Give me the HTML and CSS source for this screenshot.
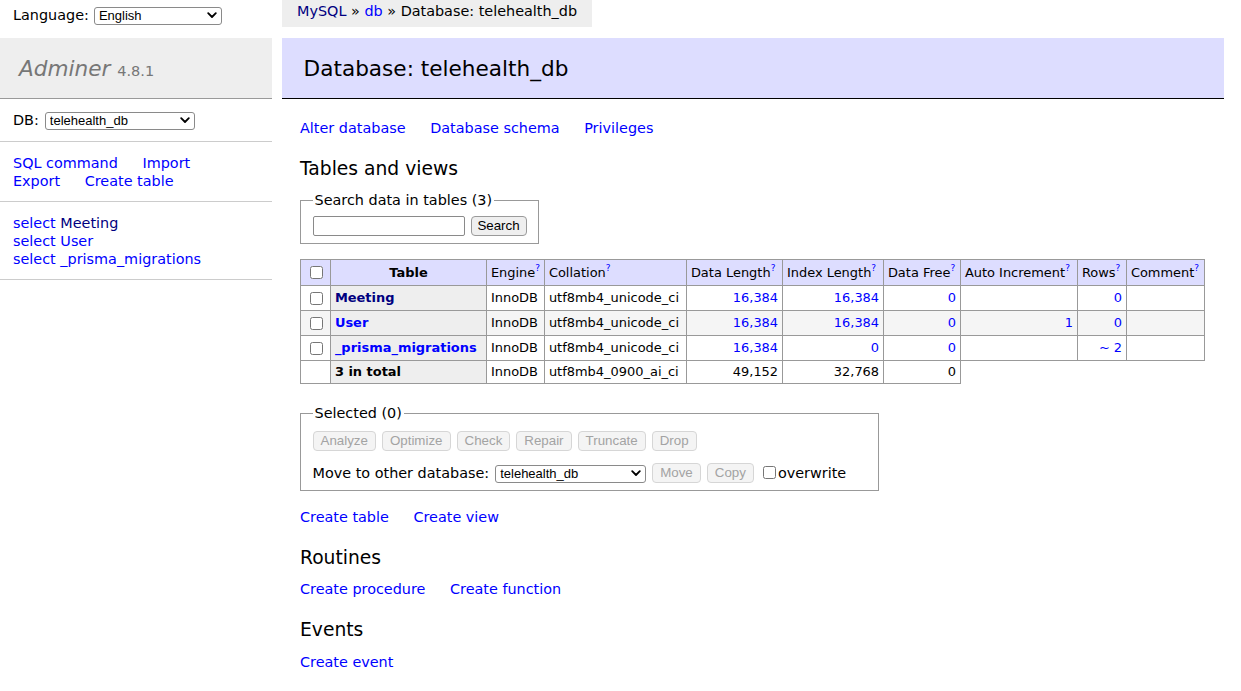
FILE: index.html
```html
<!DOCTYPE html>
<html lang="en">
<head>
<meta charset="utf-8">
<title>Database: telehealth_db - Adminer</title>
<link rel="stylesheet" href="styles.css">
</head>
<body>
<div class="page">
  <div class="lang">
    <span class="lang-label">Language:</span>
    <span class="sel sel-lang">
      <select><option>English</option></select>
      <svg class="chev" width="10" height="7" viewBox="0 0 10 7"><path d="M1.2 1.2 L5 5 L8.8 1.2" fill="none" stroke="#000" stroke-width="1.8" stroke-linecap="round" stroke-linejoin="round"/></svg>
    </span>
  </div>
  <div class="crumb-cell">
    <div class="breadcrumb"><a href="#" class="visited">MySQL</a> » <a href="#">db</a> » Database: telehealth_db</div>
  </div>

  <aside class="menu">
    <h1><a href="#" class="logo">Adminer</a> <span class="version">4.8.1</span></h1>
    <p class="dbs">DB:
      <span class="sel sel-db">
        <select><option>telehealth_db</option></select>
        <svg class="chev" width="10" height="7" viewBox="0 0 10 7"><path d="M1.2 1.2 L5 5 L8.8 1.2" fill="none" stroke="#000" stroke-width="1.8" stroke-linecap="round" stroke-linejoin="round"/></svg>
      </span>
    </p>
    <p class="links"><a href="#">SQL command</a> <a href="#">Import</a><br><a href="#">Export</a> <a href="#">Create table</a></p>
    <ul class="table-menu">
      <li><a href="#">select</a> <a href="#" class="visited">Meeting</a></li>
      <li><a href="#">select</a> <a href="#">User</a></li>
      <li><a href="#">select</a> <a href="#">_prisma_migrations</a></li>
    </ul>
  </aside>

  <main class="content">
    <h2>Database: telehealth_db</h2>
    <p class="links"><a href="#">Alter database</a> <a href="#">Database schema</a> <a href="#">Privileges</a></p>

    <h3>Tables and views</h3>
    <fieldset class="box">
      <legend>Search data in tables (3)</legend>
      <div class="row">
        <input type="search" class="search-input">
        <button class="btn btn-search">Search</button>
      </div>
    </fieldset>

    <table class="list">
      <colgroup>
        <col class="w-cb"><col class="w-name"><col class="w-engine"><col class="w-coll"><col class="w-dlen"><col class="w-ilen"><col class="w-free"><col class="w-ai"><col class="w-rows"><col class="w-comm">
      </colgroup>
      <thead>
        <tr class="head">
          <td><input type="checkbox" class="cb"></td>
          <th class="center">Table</th>
          <td>Engine<sup><a href="#">?</a></sup></td>
          <td>Collation<sup><a href="#">?</a></sup></td>
          <td>Data Length<sup><a href="#">?</a></sup></td>
          <td>Index Length<sup><a href="#">?</a></sup></td>
          <td>Data Free<sup><a href="#">?</a></sup></td>
          <td>Auto Increment<sup><a href="#">?</a></sup></td>
          <td>Rows<sup><a href="#">?</a></sup></td>
          <td>Comment<sup><a href="#">?</a></sup></td>
        </tr>
      </thead>
      <tbody>
        <tr class="data">
          <td><input type="checkbox" class="cb"></td>
          <th><a href="#" class="visited">Meeting</a></th>
          <td>InnoDB</td>
          <td>utf8mb4_unicode_ci</td>
          <td class="num"><a href="#">16,384</a></td>
          <td class="num"><a href="#">16,384</a></td>
          <td class="num"><a href="#">0</a></td>
          <td class="num"></td>
          <td class="num"><a href="#">0</a></td>
          <td></td>
        </tr>
        <tr class="data even">
          <td><input type="checkbox" class="cb"></td>
          <th><a href="#">User</a></th>
          <td>InnoDB</td>
          <td>utf8mb4_unicode_ci</td>
          <td class="num"><a href="#">16,384</a></td>
          <td class="num"><a href="#">16,384</a></td>
          <td class="num"><a href="#">0</a></td>
          <td class="num"><a href="#">1</a></td>
          <td class="num"><a href="#">0</a></td>
          <td></td>
        </tr>
        <tr class="data">
          <td><input type="checkbox" class="cb"></td>
          <th><a href="#">_prisma_migrations</a></th>
          <td>InnoDB</td>
          <td>utf8mb4_unicode_ci</td>
          <td class="num"><a href="#">16,384</a></td>
          <td class="num"><a href="#">0</a></td>
          <td class="num"><a href="#">0</a></td>
          <td class="num"></td>
          <td class="num"><a href="#">~ 2</a></td>
          <td></td>
        </tr>
      </tbody>
      <tfoot>
        <tr class="total">
          <td></td>
          <th>3 in total</th>
          <td>InnoDB</td>
          <td>utf8mb4_0900_ai_ci</td>
          <td class="num">49,152</td>
          <td class="num">32,768</td>
          <td class="num">0</td>
        </tr>
      </tfoot>
    </table>

    <fieldset class="box selected">
      <legend>Selected (0)</legend>
      <div class="row btn-row">
        <button class="btn" disabled>Analyze</button>
        <button class="btn" disabled>Optimize</button>
        <button class="btn" disabled>Check</button>
        <button class="btn" disabled>Repair</button>
        <button class="btn" disabled>Truncate</button>
        <button class="btn" disabled>Drop</button>
      </div>
      <p class="row move-row">
        <span>Move to other database:</span>
        <span class="sel sel-move">
          <select><option>telehealth_db</option></select>
          <svg class="chev" width="10" height="7" viewBox="0 0 10 7"><path d="M1.2 1.2 L5 5 L8.8 1.2" fill="none" stroke="#000" stroke-width="1.8" stroke-linecap="round" stroke-linejoin="round"/></svg>
        </span>
        <button class="btn" disabled>Move</button>
        <button class="btn" disabled>Copy</button>
        <label class="check"><input type="checkbox" class="cb-over">overwrite</label>
      </p>
    </fieldset>

    <p class="links after"><a href="#">Create table</a> <a href="#">Create view</a></p>

    <h3>Routines</h3>
    <p class="links"><a href="#">Create procedure</a> <a href="#">Create function</a></p>

    <h3>Events</h3>
    <p class="links"><a href="#">Create event</a></p>
  </main>
</div>
</body>
</html>
```

FILE: styles.css
```css
html, body {
  margin: 0;
  padding: 0;
  background: #fff;
  color: #000;
}

body {
  font: 14.4px/1.25 "DejaVu Sans", Verdana, sans-serif;
}

a {
  color: #0000ff;
  text-decoration: none;
}

a.visited {
  color: #000080;
}

.page {
  display: grid;
  grid-template-columns: 272px 1fr;
  grid-template-rows: 28px auto;
  column-gap: 10px;
  row-gap: 10px;
}

/* top row */
.lang {
  display: flex;
  align-items: center;
  gap: 5px;
  padding: 6px 13px 0;
  height: 18px;
}

.breadcrumb {
  display: inline-block;
  background: #eee;
  height: 27px;
  line-height: 23px;
  padding: 0 15px;
  white-space: nowrap;
}

/* selects */
.sel {
  position: relative;
  display: inline-block;
  vertical-align: middle;
  height: 18px;
}

.sel select {
  appearance: none;
  -webkit-appearance: none;
  box-sizing: border-box;
  height: 18px;
  margin: 0;
  padding: 0 20px 0 4px;
  border: 1px solid #8a8a8a;
  border-radius: 3px;
  background: #fff;
  color: #000;
  font: 13px/16px "Liberation Sans", Arial, sans-serif;
}

.sel .chev {
  position: absolute;
  right: 5px;
  top: 6px;
  pointer-events: none;
}

.sel-lang select { width: 128px; }
.sel-db select { width: 150px; }
.sel-move select { width: 151px; }

/* sidebar */
.menu h1 {
  box-sizing: content-box;
  height: 27px;
  margin: 0;
  padding: 17px 19px 16px;
  font-size: 21.6px;
  line-height: 27px;
  font-weight: normal;
  color: #777;
  background: #eee;
  border-bottom: 1px solid #999;
  white-space: nowrap;
}

.logo {
  color: #777;
  font-style: italic;
}

.version {
  color: #777;
  font-size: 14.5px;
  line-height: 1;
}

.menu p,
.table-menu {
  margin: 0;
  padding: 11.5px 13px;
  border-bottom: 1px solid #ccc;
}

.menu .dbs {
  display: flex;
  align-items: center;
  gap: 6px;
  height: 19px;
}

.table-menu {
  list-style: none;
  white-space: nowrap;
}

/* content */
.content {
  padding: 0 17px 20px 18px;
  min-width: 0;
}

.content h2 {
  margin: 0 0 20px -18px;
  padding: 17px 21.6px 16px;
  font-size: 21.6px;
  line-height: 27px;
  font-weight: normal;
  background: #ddf;
  border-bottom: 1px solid #000;
}

.content p {
  margin: 11.5px 20px 0 0;
}

.links a {
  margin-right: 20px;
  white-space: nowrap;
}

.content h3 {
  margin: 20px 0 0;
  font-size: 18.72px;
  line-height: 1.25;
  font-weight: normal;
}

.content h3 + p {
  margin-top: 11px;
}

.box {
  display: block;
  width: max-content;
  margin: 11px 0 0;
  padding: 7px 11.5px;
  border: 1px solid #999;
}

.box legend {
  padding: 0 2px;
}

.row {
  display: flex;
  align-items: center;
  gap: 6px;
}

.search-input {
  box-sizing: border-box;
  width: 152px;
  height: 20px;
  margin: 0;
  padding: 1px 3px;
  border: 1px solid #8a8a8a;
  border-radius: 2px;
  font: 13px "Liberation Sans", Arial, sans-serif;
}

.btn {
  box-sizing: border-box;
  height: 20px;
  margin: 0;
  padding: 0 7px;
  border: 1px solid #9a9a9a;
  border-radius: 4px;
  background: #efefef;
  color: #000;
  font: 13.33px/18px "Liberation Sans", Arial, sans-serif;
}

.btn-search {
  width: 56px;
  padding: 0;
}

.btn:disabled {
  color: #a3a3a3;
  background: #f4f4f4;
  border-color: #d6d6d6;
}

/* table */
.list {
  margin: 15px 0 0;
  border-collapse: collapse;
  table-layout: fixed;
  width: 904px;
  font-size: 12.96px;
  line-height: 16px;
}

.w-cb { width: 30px; }
.w-name { width: 156px; }
.w-engine { width: 58px; }
.w-coll { width: 142px; }
.w-dlen { width: 96px; }
.w-ilen { width: 101px; }
.w-free { width: 77px; }
.w-ai { width: 117px; }
.w-rows { width: 49px; }
.w-comm { width: 78px; }

.list td,
.list th {
  border: 1px solid #999;
  padding: 2px 3.9px;
  white-space: nowrap;
  overflow: hidden;
  vertical-align: middle;
}

.list th {
  background: #eee;
  text-align: left;
  font-weight: bold;
}

.list thead td,
.list thead th {
  background: #ddf;
}

.list th.center {
  text-align: center;
}

.list tr.head { height: 26px; }
.list tr.data { height: 25px; }
.list tr.total { height: 23px; }

.list tr.even td {
  background: #f5f5f5;
}

.list .num {
  text-align: right;
}

.list sup {
  font-size: 9px;
  line-height: 0;
  vertical-align: 6px;
}

.cb {
  display: block;
  width: 13px;
  height: 13px;
  margin: 0 0 0 5px;
}

.selected {
  margin-top: 20px;
}

.btn-row {
  margin-top: 2px;
}

.content .move-row {
  margin: 11.5px 20px 0 0;
  height: 20px;
}

.check {
  display: flex;
  align-items: center;
  margin-left: 3px;
}

.cb-over {
  width: 13px;
  height: 13px;
  margin: 0 2px 0 0;
}

.content .after {
  margin-top: 17px;
}
```
